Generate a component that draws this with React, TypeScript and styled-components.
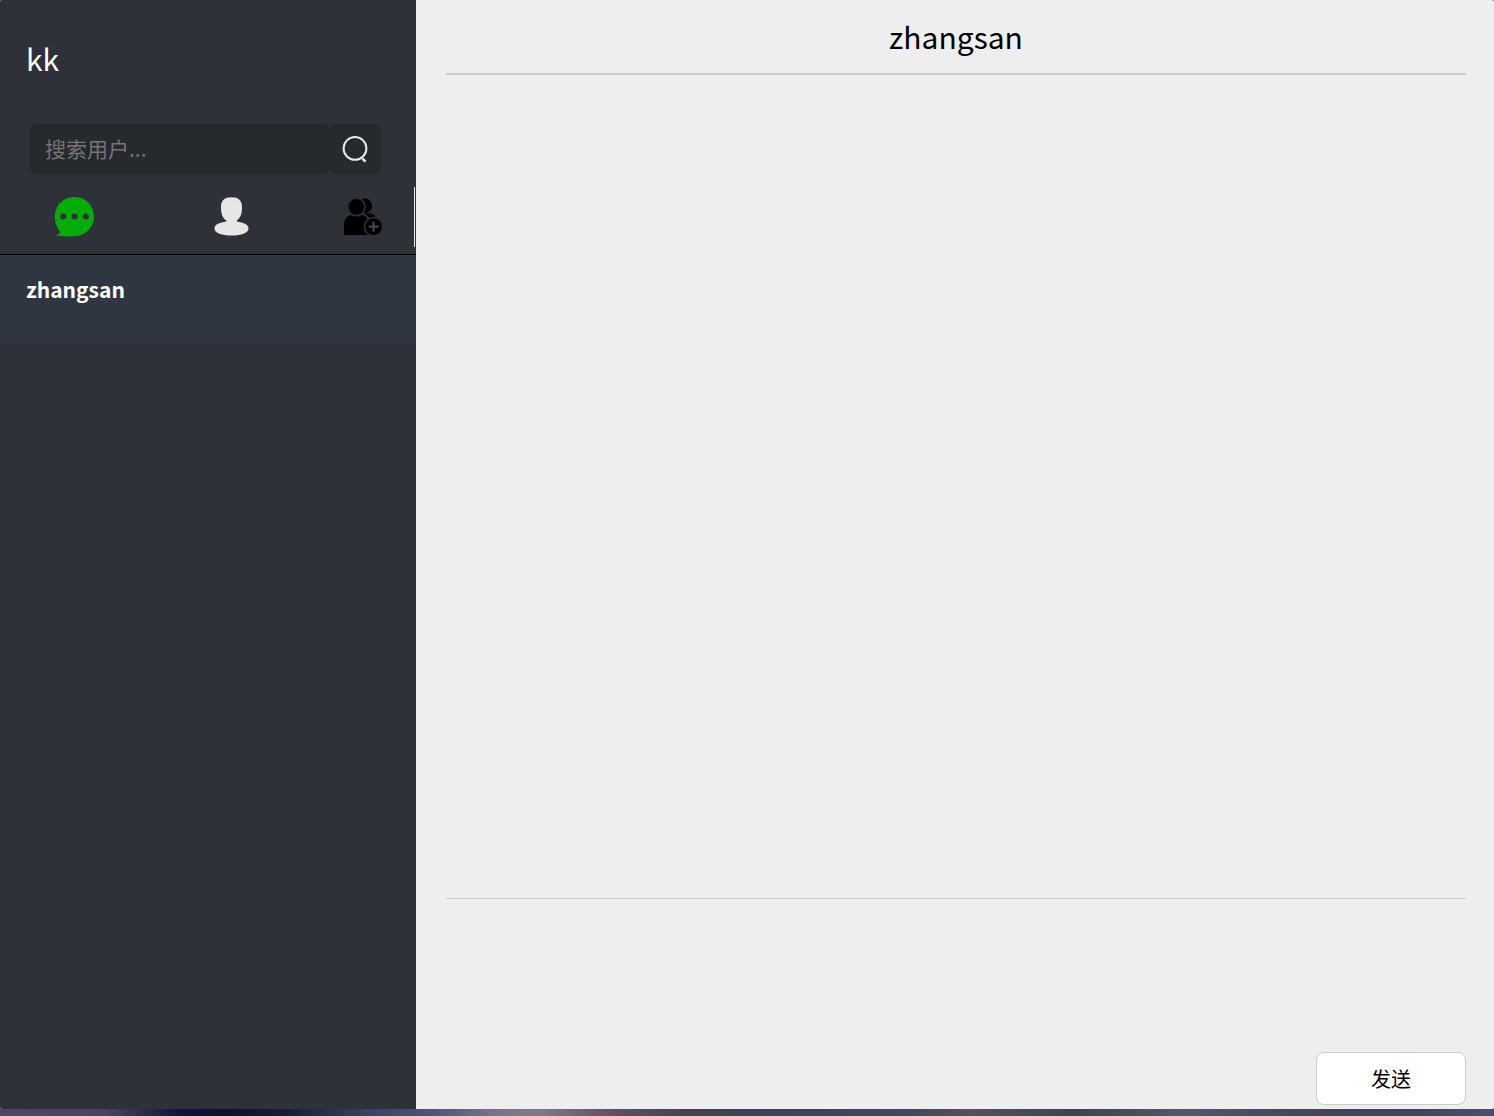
import React, { useState } from 'react';
import styled, { createGlobalStyle } from 'styled-components';

const GlobalStyle = createGlobalStyle`
  *, *::before, *::after { box-sizing: border-box; }
  body { margin: 0; }
  body, input, textarea, button {
    font-family: "Noto Sans CJK SC", "Noto Sans", sans-serif;
  }
`;

const Desktop = styled.div`
  display: flex;
  flex-direction: column;
  height: 100vh;
  padding-bottom: 7px;
  background: linear-gradient(
    90deg,
    #4d4664 0%, #4a4462 7%, #14123a 12%, #100e30 15%, #171c34 19%,
    #3d4365 25%, #50547a 29%, #77738a 33%, #82788b 36%, #5f5060 41%,
    #44424f 46%, #3e415a 52%, #43455c 60%, #53505e 65%, #3f434f 72%,
    #50586a 79%, #454459 88%, #42455c 95%, #4b4f70 100%
  );
`;

const Window = styled.div`
  display: flex;
  flex: 1;
  min-height: 0;
  overflow: hidden;
  border-radius: 2px;
  background: #eeeeee;
`;

const Sidebar = styled.aside`
  display: flex;
  flex-direction: column;
  flex: 0 0 416px;
  background: #2e3138;
`;

const UserName = styled.h1`
  margin: 0;
  padding: 34px 26px 42px;
  color: #ffffff;
  font-size: 30px;
  font-weight: 400;
  line-height: 48px;
`;

const SearchForm = styled.form`
  display: flex;
  height: 51px;
  margin: 0 35px 12px 30px;
`;

const SearchInput = styled.input`
  flex: 1;
  min-width: 0;
  padding: 0 15px 4px;
  border: 0;
  border-radius: 8px;
  outline: 0;
  background: #26292e;
  color: #ffffff;
  font-size: 21px;
  &::placeholder { color: #757575; }
`;

const SearchButton = styled.button`
  display: flex;
  align-items: center;
  justify-content: center;
  width: 51px;
  padding: 0 2px 2px 0;
  border: 0;
  border-radius: 8px;
  background: #26292e;
`;

const Tabs = styled.nav`
  padding: 0 1px 7px 0;
  border-bottom: 1px solid #000000;
`;

const TabRow = styled.div`
  display: grid;
  grid-template-columns: 9fr 10fr 6fr;
  height: 60px;
  padding-right: 2px;
  border-right: 1px solid #eeeeee;
`;

const TabButton = styled.button`
  display: flex;
  align-items: center;
  justify-content: center;
  padding: 0;
  border: 0;
  background: none;
`;

const Chats = styled.ul`
  margin: 0;
  padding: 0;
  list-style: none;
`;

const ChatButton = styled.button<{ $active: boolean }>`
  display: block;
  width: 100%;
  height: 89px;
  padding: 0 26px 22px;
  border: 0;
  background: ${(p) => (p.$active ? '#2f3641' : 'transparent')};
  color: #ffffff;
  font-size: 21px;
  font-weight: 700;
  text-align: left;
`;

const Conversation = styled.main`
  display: flex;
  flex: 1;
  flex-direction: column;
  min-width: 0;
  padding: 0 28px 4px 30px;
`;

const Title = styled.h2`
  margin: 0;
  padding: 12px 0 13px;
  border-bottom: 2px solid #cccccc;
  color: #000000;
  font-size: 30px;
  font-weight: 400;
  line-height: 48px;
  text-align: center;
`;

const Messages = styled.section`
  flex: 1;
  min-height: 0;
  overflow-y: auto;
`;

const Composer = styled.form`
  display: flex;
  flex-direction: column;
  height: 207px;
  border-top: 1px solid #cccccc;
`;

const MessageInput = styled.textarea`
  flex: 1;
  padding: 12px 0;
  border: 0;
  outline: 0;
  resize: none;
  background: transparent;
  font-size: 21px;
`;

const SendButton = styled.button`
  align-self: flex-end;
  width: 150px;
  height: 53px;
  padding: 0;
  border: 1px solid #cccccc;
  border-radius: 8px;
  background: #ffffff;
  color: #000000;
  font-size: 20px;
`;

const SearchIcon = () => (
  <svg width="30" height="30" viewBox="0 0 30 30" fill="none" stroke="#e8e8e8" strokeWidth="2" aria-hidden="true">
    <circle cx="15" cy="14.4" r="11.4" />
    <path d="M22.4 24.6l3.2 3" strokeWidth="2.6" />
  </svg>
);

const ChatIcon = () => (
  <svg width="40" height="40" viewBox="0 0 40 40" aria-hidden="true">
    <path fill="#04ac04" d="M20.500 0C31.500 0 40 8.600 40 19.600S31.500 39.300 20 39.300C14 39.600 7.500 39.200 1.500 38.500C3.500 38 5.500 37 6.500 35C3 31.200 .8 25.800 .8 19.600C.8 8.600 9.500 0 20.500 0Z" />
    <g fill="#2e3138">
      <circle cx="9.400" cy="19.500" r="3" />
      <circle cx="20.600" cy="19.500" r="3" />
      <circle cx="31.900" cy="19.500" r="3" />
    </g>
  </svg>
);

const PersonIcon = () => (
  <svg width="36" height="40" viewBox="0 0 36 40" aria-hidden="true">
    <path fill="#e6e6e6" d="M18.500 .3C25.500 .3 29 3.500 29 10C29 16.500 27.800 20.700 23.500 23.800C23.700 24.600 25 24.900 27.500 25.300C32 26.300 35.500 28.300 35.500 31.500C35.500 36.300 28 38.500 18.500 38.500S1.500 36.300 1.500 31.500C1.500 28.300 5 26.300 9.500 25.300C12 24.900 13.300 24.600 13.500 23.800C9.200 20.700 8 16.500 8 10C8 3.500 11.500 .3 18.500 .3Z" />
  </svg>
);

const AddFriendIcon = () => (
  <svg width="42" height="40" viewBox="0 0 42 40" aria-hidden="true">
    <circle cx="22.800" cy="8.800" r="7.300" />
    <path d="M21.500 17.500C24.500 16 26.500 15.500 29 16.500C32 17.500 33.500 19 34 21L26.500 22Z" />
    <path d="M21.500 17.500C25.500 19 27.500 21 28.500 25" fill="none" stroke="#2e3138" strokeWidth="1.600" />
    <circle cx="14.300" cy="9.800" r="9.500" fill="#2e3138" />
    <circle cx="14.300" cy="9.800" r="7.900" />
    <path d="M2 38V27.500C2 22.500 4.500 19.500 8.600 17.900C12.400 20 16.400 20 20.200 17.900C24.500 19.500 27 23 27 28V38Z" />
    <circle cx="31.600" cy="29.700" r="10" fill="#2e3138" />
    <circle cx="31.600" cy="29.700" r="8.400" />
    <path d="M31.600 24.700V34.700M26.600 29.700H36.600" stroke="#45474d" strokeWidth="2.200" />
  </svg>
);

export default function App() {
  const [active, setActive] = useState('zhangsan');
  const chats = ['zhangsan'];

  return (
    <>
      <GlobalStyle />
      <Desktop>
        <Window>
          <Sidebar>
            <UserName>kk</UserName>
            <SearchForm role="search" onSubmit={(e) => e.preventDefault()}>
              <SearchInput type="text" aria-label="搜索用户" placeholder="搜索用户..." />
              <SearchButton type="submit" aria-label="搜索"><SearchIcon /></SearchButton>
            </SearchForm>
            <Tabs>
              <TabRow>
                <TabButton type="button" aria-label="聊天"><ChatIcon /></TabButton>
                <TabButton type="button" aria-label="联系人"><PersonIcon /></TabButton>
                <TabButton type="button" aria-label="添加好友"><AddFriendIcon /></TabButton>
              </TabRow>
            </Tabs>
            <Chats>
              {chats.map((name) => (
                <li key={name}>
                  <ChatButton type="button" $active={name === active} onClick={() => setActive(name)}>
                    {name}
                  </ChatButton>
                </li>
              ))}
            </Chats>
          </Sidebar>
          <Conversation>
            <Title>{active}</Title>
            <Messages aria-label="消息" />
            <Composer onSubmit={(e) => e.preventDefault()}>
              <MessageInput aria-label="输入消息" />
              <SendButton type="submit">发送</SendButton>
            </Composer>
          </Conversation>
        </Window>
      </Desktop>
    </>
  );
}
